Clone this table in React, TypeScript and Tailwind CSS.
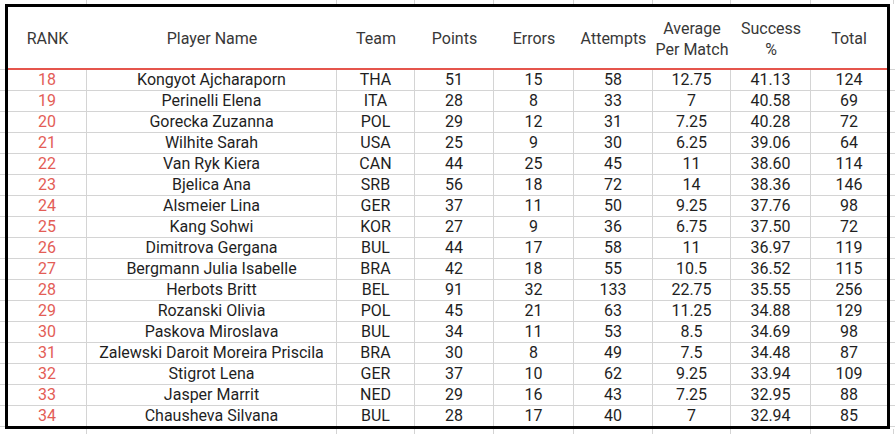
const rows: [number, string, string, number, number, number, string, string, number][] = [
  [18, 'Kongyot Ajcharaporn', 'THA', 51, 15, 58, '12.75', '41.13', 124],
  [19, 'Perinelli Elena', 'ITA', 28, 8, 33, '7', '40.58', 69],
  [20, 'Gorecka Zuzanna', 'POL', 29, 12, 31, '7.25', '40.28', 72],
  [21, 'Wilhite Sarah', 'USA', 25, 9, 30, '6.25', '39.06', 64],
  [22, 'Van Ryk Kiera', 'CAN', 44, 25, 45, '11', '38.60', 114],
  [23, 'Bjelica Ana', 'SRB', 56, 18, 72, '14', '38.36', 146],
  [24, 'Alsmeier Lina', 'GER', 37, 11, 50, '9.25', '37.76', 98],
  [25, 'Kang Sohwi', 'KOR', 27, 9, 36, '6.75', '37.50', 72],
  [26, 'Dimitrova Gergana', 'BUL', 44, 17, 58, '11', '36.97', 119],
  [27, 'Bergmann Julia Isabelle', 'BRA', 42, 18, 55, '10.5', '36.52', 115],
  [28, 'Herbots Britt', 'BEL', 91, 32, 133, '22.75', '35.55', 256],
  [29, 'Rozanski Olivia', 'POL', 45, 21, 63, '11.25', '34.88', 129],
  [30, 'Paskova Miroslava', 'BUL', 34, 11, 53, '8.5', '34.69', 98],
  [31, 'Zalewski Daroit Moreira Priscila', 'BRA', 30, 8, 49, '7.5', '34.48', 87],
  [32, 'Stigrot Lena', 'GER', 37, 10, 62, '9.25', '33.94', 109],
  [33, 'Jasper Marrit', 'NED', 29, 16, 43, '7.25', '32.95', 88],
  [34, 'Chausheva Silvana', 'BUL', 28, 17, 40, '7', '32.94', 85],
];

const headers = ['RANK', 'Player Name', 'Team', 'Points', 'Errors', 'Attempts', 'Average\nPer Match', 'Success\n%', 'Total'];

// sheet columns outside the table (top / bottom strips)
const stripCols = ['w-[87px]', 'w-[250px]', 'w-[78px]', 'w-[79px]', 'w-[80px]', 'w-[79px]', 'w-[78px]', 'w-[80px]', 'w-[83px]'];

function Strip({ h }: { h: string }) {
  return (
    <div className={`flex ${h}`}>
      {stripCols.map((w, i) => (
        <div key={i} className={`${w} shrink-0 border-r border-[#d4d4d4]`} />
      ))}
    </div>
  );
}

function SideStrip({ w }: { w: string }) {
  return (
    <div className={`${w} shrink-0 flex flex-col`}>
      <div className="h-[66px] border-b border-[#d4d4d4]" />
      {rows.map((r) => (
        <div key={r[0]} className="h-[21px] border-b border-[#d4d4d4]" />
      ))}
    </div>
  );
}

export default function App() {
  const gridCols = 'grid grid-cols-[79px_250px_78px_79px_80px_79px_78px_80px_76px]';

  return (
    <div className="w-[895px] h-[434px] overflow-hidden bg-white font-['Roboto',sans-serif] text-[16px]">
      <Strip h="h-[4px]" />
      <div className="flex">
        <SideStrip w="w-[5px]" />
        <div className="border-[3px] border-black shrink-0">
          <div className={`${gridCols} h-[63px] border-b-2 border-[#e5554c] text-[#383838]`}>
            {headers.map((h) => (
              <div key={h} className="flex items-center justify-center text-center leading-[21px] whitespace-pre-line pt-[2px]">
                {h}
              </div>
            ))}
          </div>
          <div className={gridCols}>
            {rows.map((r, ri) =>
              r.map((v, ci) => (
                <div
                  key={`${ri}-${ci}`}
                  className={`flex items-center justify-center leading-[20px] border-[#d4d4d4] ${
                    ri < rows.length - 1 ? 'h-[21px] border-b' : 'h-[20px]'
                  } ${ci < 8 ? 'border-r' : ''} ${ci === 0 ? 'text-[#e35d56]' : 'text-[#1f1f1f]'}`}
                >
                  {v}
                </div>
              ))
            )}
          </div>
        </div>
        <SideStrip w="w-[5px]" />
      </div>
      <Strip h="h-[8px]" />
    </div>
  );
}
